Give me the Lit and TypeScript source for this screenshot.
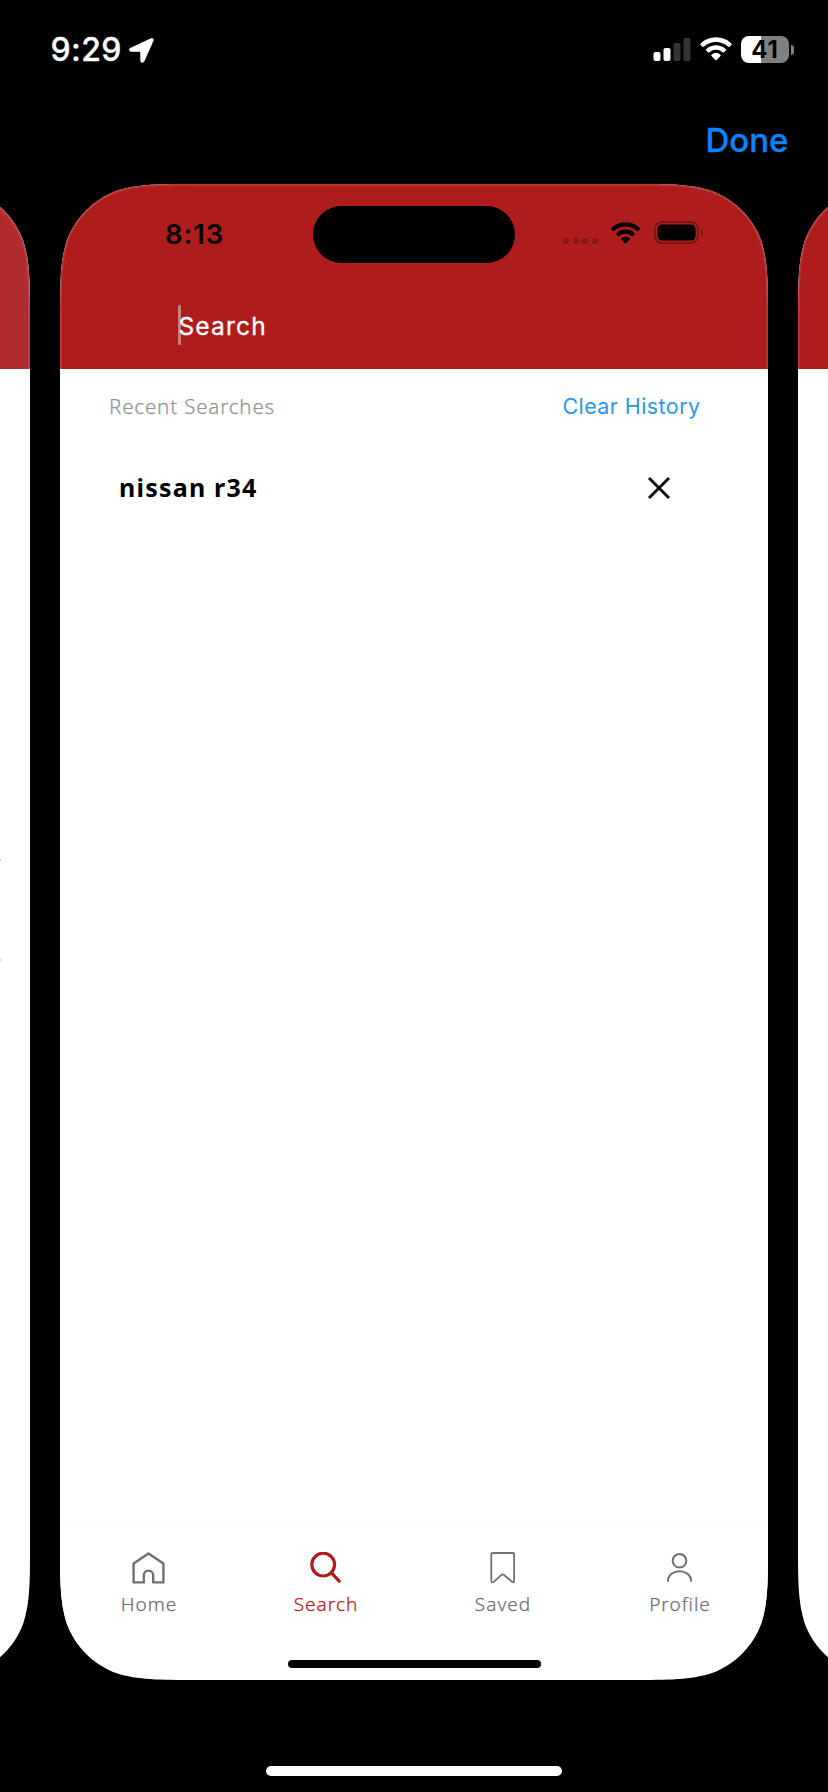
import { LitElement, html, css, svg, unsafeCSS } from "lit";
import { customElement } from "lit/decorators.js";

// Outline of a preview card with continuous (smoothed) corners.
const CARD = "M137.6 0H570.4C610 0 629.8 0 651.2 6.7C674.5 15.2 692.8 33.5 701.3 56.8C708 78.2 708 98 708 137.6V1358.4C708 1398 708 1417.8 701.3 1439.2C692.8 1462.5 674.5 1480.8 651.2 1489.3C629.8 1496 610 1496 570.4 1496H137.6C98 1496 78.2 1496 56.8 1489.3C33.5 1480.8 15.2 1462.5 6.7 1439.2C0 1417.8 0 1398 0 1358.4V137.6C0 98 0 78.2 6.7 56.8C15.2 33.5 33.5 15.2 56.8 6.7C78.2 0 98 0 137.6 0Z";

const wifi = html`<svg class="wifi" viewBox="0 0 32 24">
  <path d="M.8 8.200Q-.2 7.200 .9 6.200A22.300 22.300 0 0 1 31.100 6.200Q32.200 7.200 31.200 8.200L29.700 9.700Q28.900 10.400 28 9.600A18 18 0 0 0 4 9.600Q3.100 10.400 2.300 9.700Z" />
  <path d="M6.200 13.600Q5.400 12.700 6.400 11.900A14.500 14.500 0 0 1 25.600 11.900Q26.600 12.700 25.800 13.600L24.100 15.300Q23.300 15.900 22.500 15.200A9.800 9.800 0 0 0 9.500 15.200Q8.700 15.900 7.900 15.300Z" />
  <path d="M11.500 19Q10.800 18.100 11.800 17.400A6.800 6.800 0 0 1 20.200 17.400Q21.200 18.100 20.500 19L16.700 23Q16 23.600 15.300 23Z" />
</svg>`;

const rim = html`<svg class="rim" viewBox="0 0 708 1496"><path d=${CARD} /></svg>`;

const tabs = [
  { name: "Home", icon: svg`<path stroke-width="2.4" d="M1.600 11.400L16.500 1.400L31.400 11.400V30.400H21.200V23.300A4.700 4.700 0 0 0 11.800 23.300V30.400H1.600Z"/>` },
  { name: "Search", icon: svg`<circle cx="14.200" cy="12.600" r="11.400" stroke-width="3.200"/><path stroke-width="3.200" stroke-linecap="round" d="M22.400 20.800L30.200 29.200"/>` },
  { name: "Saved", icon: svg`<path stroke-width="1.800" d="M6.800 1H26.800Q28.100 1 28.100 2.300V28.600Q28.100 31.200 26.100 29.700L17.700 22.800Q16.600 22 15.500 22.900L8 29.600Q5.300 31.600 5.300 28.600V2.300Q5.300 1 6.800 1Z"/>` },
  { name: "Profile", icon: svg`<circle cx="16.500" cy="8.800" r="6.800" stroke-width="2"/><path stroke-width="2" d="M4.800 29.800C5 15.600 28 15.600 28.200 29.800"/>` },
];

@customElement("app-root")
export class AppRoot extends LitElement {
  static styles = css`
    :host { display: block; width: 828px; height: 1792px; background: #000; overflow: hidden; font-family: Inter, sans-serif; }
    * { box-sizing: border-box; }
    svg { display: block; flex: none; }
    .screen { display: flex; flex-direction: column; height: 1792px; }
    .status { display: flex; align-items: center; height: 100px; padding: 0 34px 0 50.5px; color: #fff; }
    .clock { font-size: 32px; font-weight: 500; line-height: 40px; letter-spacing: 0.4px; -webkit-text-stroke: .3px currentColor; }
    .arrow { width: 25px; height: 25px; margin-left: 7px; fill: #fff; }
    .push { flex: 1; }
    .bars { width: 38px; height: 24px; margin: 0 9px 2px 0; fill: #fff; }
    .bars .off { fill: #333; }
    .wifi { width: 32px; height: 24px; }
    .status .wifi { fill: #fff; margin: 0 9px 2px 0; }
    .battery { display: flex; align-items: center; justify-content: center; width: 48px; height: 27px; margin-bottom: 1px; border-radius: 8px; background: linear-gradient(90deg, #fff 20px, #808080 20px); color: #000; font-size: 24px; font-weight: 700; letter-spacing: .8px; }
    .cap { width: 3px; height: 10px; margin: 0 0 1px 2px; border-radius: 0 4px 4px 0; background: #808080; }
    .actions { display: flex; justify-content: flex-end; align-items: center; height: 84px; padding: 0 39.5px 4px 0; }
    .done { color: #0a84ff; font-size: 33px; font-weight: 500; line-height: 40px; -webkit-text-stroke: .3px currentColor; }
    .carousel { display: flex; gap: 30px; width: 828px; height: 1496px; justify-content: center; }
    .card { position: relative; flex: none; width: 708px; height: 1496px; display: flex; flex-direction: column; background: #fff; clip-path: path("${unsafeCSS(CARD)}"); }
    .rim { position: absolute; left: 0; top: 0; width: 708px; height: 1496px; fill: none; stroke: rgba(255,255,255,.12); stroke-width: 3.6; }
    .header { display: flex; flex-direction: column; height: 184.5px; background: #ae1d1c; flex: none; }
    .dim .header { background: #b02c2e; }
    .phone { display: flex; align-items: center; height: 58px; margin-top: 21px; padding: 0 65px 0 105px; }
    .time { width: 148px; font-size: 27.5px; font-weight: 600; line-height: 34px; letter-spacing: .9px; }
    .island { width: 202px; height: 57px; margin-top: 1px; border-radius: 28.5px; background: #000; }
    .dots { display: flex; gap: 3.7px; margin: 14px 12px 0 0; }
    .dots i { width: 6px; height: 6px; border-radius: 2px; background: #8a1616; }
    .phone .wifi { width: 31px; height: 22px; margin: 0 12px 3px 0; fill: #000; }
    .cell { width: 50px; height: 23px; margin: 0 -.5px 2.5px .5px; }
    .field { display: flex; align-items: center; height: 40px; margin: 42px 0 0 118px; color: #fff; font-size: 24.5px; letter-spacing: 1.2px; }
    .caret { width: 3px; height: 40px; border-radius: 1px; background: #cc7d7d; margin-right: -2.6px; }
    .q { padding-top: 2px; font-weight: 400; -webkit-text-stroke: .3px currentColor; }
    .row { display: flex; justify-content: space-between; align-items: center; height: 75px; padding: 0 67.5px 0 49px; flex: none; }
    .recent { font: 300 20.5px/30px "Noto Sans", sans-serif; letter-spacing: .85px; color: #949494; -webkit-text-stroke: .25px currentColor; }
    .clear { font-size: 21.5px; line-height: 30px; letter-spacing: .42px; color: #2b97e8; }
    .entry { display: flex; justify-content: space-between; align-items: center; height: 86px; padding: 0 98px 0 59px; flex: none; }
    .term { font: 700 25px/34px "Noto Sans", sans-serif; letter-spacing: 1.22px; color: #000; }
    .x { width: 22px; height: 22px; margin-top: 2px; stroke: #000; stroke-width: 2.8; }
    .specks { display: flex; flex-direction: column; gap: 98px; margin: 490px 0 0 678px; }
    .specks i { width: 1px; height: 2px; background: #d0d0d0; }
    .tabbar { display: grid; grid-template-columns: repeat(4, 177px); height: 134px; padding-top: 25px; border-top: 1px solid #fbfbfb; background: #fff; color: #707070; flex: none; }
    .tab { display: flex; flex-direction: column; align-items: center; font: 300 19px/26px "Noto Sans", sans-serif; letter-spacing: 1px; -webkit-text-stroke: .25px currentColor; }
    .tab span { padding-left: 1px; }
    .tab svg { width: 33px; height: 32px; fill: none; stroke: currentColor; stroke-linejoin: round; margin-bottom: 7px; }
    .tab.on { color: #ae1d1c; }
    .home { width: 253px; height: 8px; border-radius: 4px; background: #000; margin: 0 auto 12px 228px; flex: none; }
    .foot { display: flex; justify-content: center; padding-top: 86px; }
    .bar { width: 296px; height: 10px; border-radius: 5px; background: #fff; }
  `;

  render() {
    return html`<main class="screen">
      <div class="status">
        <span class="clock">9:29</span>
        <svg class="arrow" viewBox="0 0 25 25"><path d="M22 .3Q25.200 -.5 24.600 2.500L15.500 23Q14.600 25 13 24.800Q11.300 24.500 11.300 22.500V14.700Q11.300 13.800 10.400 13.800H2.200Q.3 13.700 .1 12Q0 10.400 1.800 9.700Z"/></svg>
        <span class="push"></span>
        <svg class="bars" viewBox="0 0 38 24"><rect x="0.500" y="15" width="7" height="9" rx="2"/><rect x="10.500" y="11" width="7" height="13" rx="2"/><rect class="off" x="20.500" y="6" width="7" height="18" rx="2"/><rect class="off" x="30.500" y="1" width="7" height="23" rx="2"/></svg>
        ${wifi}
        <span class="battery">41</span><i class="cap"></i>
      </div>
      <div class="actions"><span class="done">Done</span></div>
      <div class="carousel">
        <div class="card dim"><div class="header"></div><div class="specks"><i></i><i></i></div>${rim}</div>
        <div class="card">
          <div class="header">
            <div class="phone">
              <span class="time">8:13</span><span class="island"></span><span class="push"></span>
              <span class="dots"><i></i><i></i><i></i><i></i></span>${wifi}
              <svg class="cell" viewBox="0 0 50 23"><rect x="1" y="1" width="43" height="21" rx="7" fill="none" stroke="#6f1212" stroke-width="1.600"/><rect x="3.500" y="3.500" width="38" height="16" rx="4.500"/><path d="M47 8Q49 9 49 11.500T47 15Z" fill="#6f1212"/></svg>
            </div>
            <div class="field"><i class="caret"></i><span class="q">Search</span></div>
          </div>
          <div class="row"><span class="recent">Recent Searches</span><span class="clear">Clear History</span></div>
          <div class="entry"><span class="term">nissan r34</span><svg class="x" viewBox="0 0 22 22"><path d="M1 1L21 21M21 1L1 21"/></svg></div>
          <span class="push"></span>
          <div class="tabbar">${tabs.map((t) => html`<div class="tab ${t.name === "Search" ? "on" : ""}"><svg viewBox="0 0 33 32">${t.icon}</svg><span>${t.name}</span></div>`)}</div>
          <i class="home"></i>
          ${rim}
        </div>
        <div class="card"><div class="header"></div>${rim}</div>
      </div>
      <div class="foot"><i class="bar"></i></div>
    </main>`;
  }
}
